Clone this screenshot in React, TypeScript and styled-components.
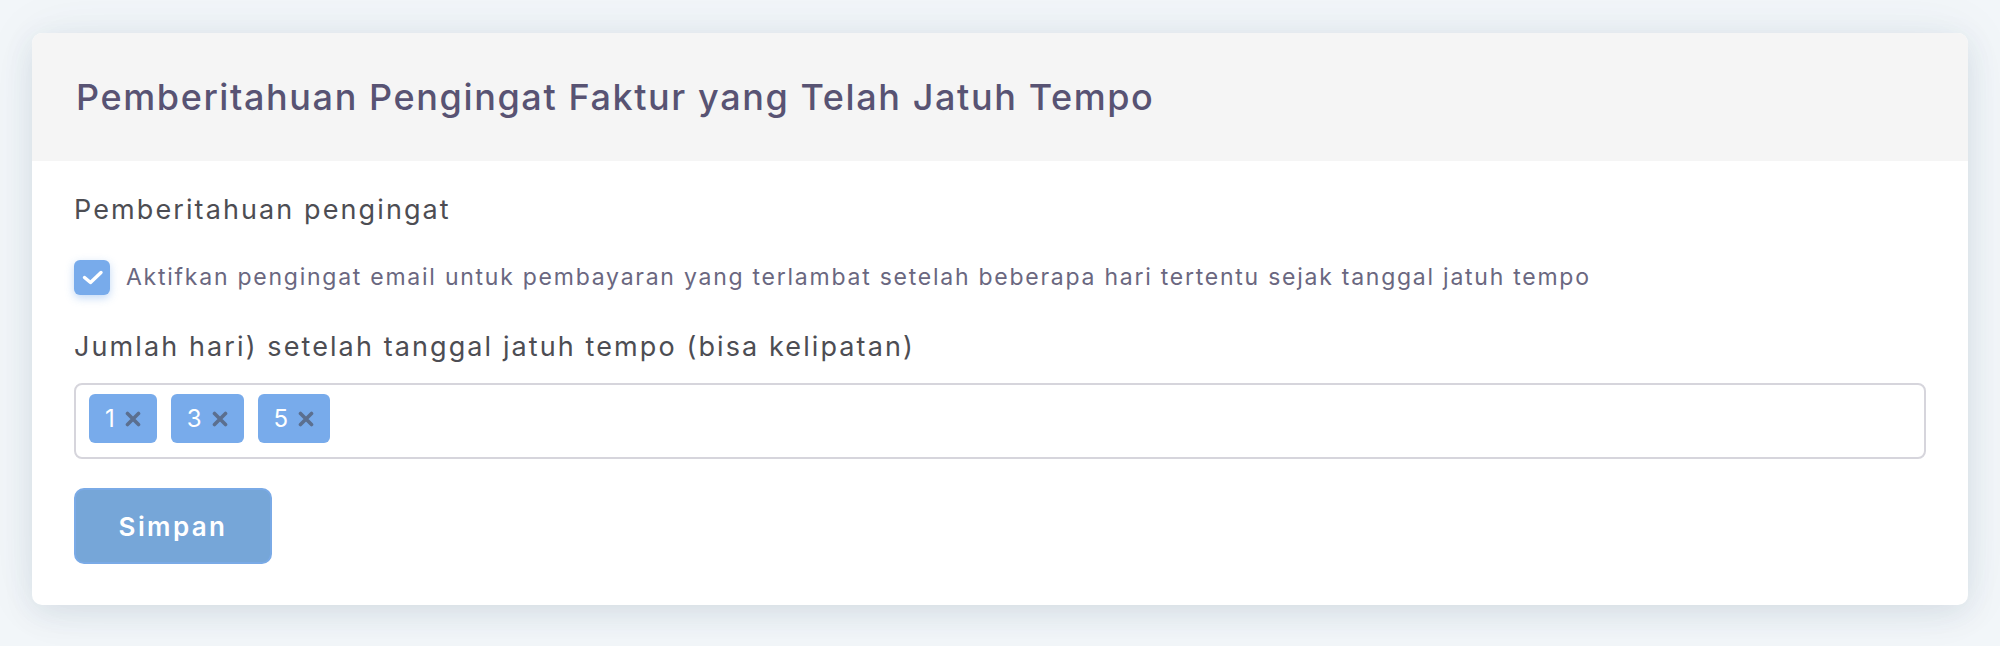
import React from "react";
import styled, { createGlobalStyle } from "styled-components";

const GlobalStyle = createGlobalStyle`
  html, body {
    margin: 0;
    padding: 0;
    background: #f2f6f9;
    font-family: "Inter", "Noto Sans", sans-serif;
  }
  * { box-sizing: border-box; }
`;

const Page = styled.div`
  padding: 33px 32px 41px;
`;

const Card = styled.section`
  background: #ffffff;
  border-radius: 10px;
  overflow: hidden;
  box-shadow: 0 8px 30px rgba(40, 70, 100, 0.1), 0 0 60px rgba(40, 70, 100, 0.06);
`;

const Header = styled.header`
  height: 128px;
  background: #f5f5f5;
  padding: 0 44px;
  display: flex;
  align-items: center;
`;

const Title = styled.h1`
  margin: 0;
  font-size: 36px;
  font-weight: 500;
  color: #585373;
  letter-spacing: 1.6px;
`;

const Body = styled.div`
  padding: 31px 42px 41px;
  display: flex;
  flex-direction: column;
`;

const FieldLabel = styled.div<{ $gap?: number }>`
  font-size: 27px;
  line-height: 36px;
  color: #4d4d53;
  letter-spacing: 2.1px;
  margin-top: ${(p) => p.$gap ?? 0}px;
`;

const CheckRow = styled.label`
  display: flex;
  align-items: center;
  gap: 16px;
  margin-top: 32px;
  height: 35px;
  cursor: pointer;
`;

const CheckBox = styled.span`
  width: 36px;
  height: 35px;
  border-radius: 6px;
  background: #78abeb;
  box-shadow: 0 3px 8px rgba(120, 171, 235, 0.45);
  display: flex;
  flex-shrink: 0;
`;

const CheckText = styled.span`
  font-size: 23px;
  line-height: 35px;
  color: #6a6780;
  letter-spacing: 1.75px;
  white-space: nowrap;
`;

const TagInput = styled.div`
  margin-top: 18px;
  height: 76px;
  border: 2px solid #d6d5dc;
  border-radius: 8px;
  padding: 9px 13px;
  display: flex;
  align-items: flex-start;
  gap: 14px;
`;

const Chip = styled.span`
  height: 49px;
  padding: 0 16px;
  border-radius: 6px;
  background: #78abeb;
  color: #ffffff;
  font-size: 24px;
  display: inline-flex;
  align-items: center;
  gap: 10px;
`;

const SaveButton = styled.button`
  margin-top: 29px;
  width: 198px;
  height: 76px;
  border: 2px solid #7aaae6;
  border-radius: 10px;
  background: #76a6d8;
  color: #ffffff;
  font-family: "Inter", "Noto Sans", sans-serif;
  font-size: 26px;
  font-weight: 600;
  letter-spacing: 2.4px;
  cursor: pointer;
`;

const RemoveIcon = () => (
  <svg width="16" height="16" viewBox="0 0 16 16" aria-hidden="true">
    <path
      d="M2.5 2.5 L13.5 13.5 M13.5 2.5 L2.5 13.5"
      stroke="#5b6f8f"
      strokeWidth="3.6"
      strokeLinecap="round"
    />
  </svg>
);

const CheckIcon = () => (
  <svg width="36" height="35" viewBox="0 0 36 35" aria-hidden="true">
    <path
      d="M10.5 17.5 L16.5 22.5 L27 12.5"
      fill="none"
      stroke="#ffffff"
      strokeWidth="3.4"
      strokeLinecap="round"
      strokeLinejoin="round"
    />
  </svg>
);

const days = [1, 3, 5];

export default function App() {
  return (
    <>
      <GlobalStyle />
      <Page>
        <Card>
          <Header>
            <Title>Pemberitahuan Pengingat Faktur yang Telah Jatuh Tempo</Title>
          </Header>
          <Body>
            <FieldLabel>Pemberitahuan pengingat</FieldLabel>
            <CheckRow>
              <CheckBox>
                <CheckIcon />
              </CheckBox>
              <CheckText>
                Aktifkan pengingat email untuk pembayaran yang terlambat setelah beberapa hari tertentu sejak tanggal jatuh tempo
              </CheckText>
            </CheckRow>
            <FieldLabel $gap={34}>
              Jumlah hari) setelah tanggal jatuh tempo (bisa kelipatan)
            </FieldLabel>
            <TagInput>
              {days.map((d) => (
                <Chip key={d}>
                  {d}
                  <RemoveIcon />
                </Chip>
              ))}
            </TagInput>
            <div>
              <SaveButton>Simpan</SaveButton>
            </div>
          </Body>
        </Card>
      </Page>
    </>
  );
}
